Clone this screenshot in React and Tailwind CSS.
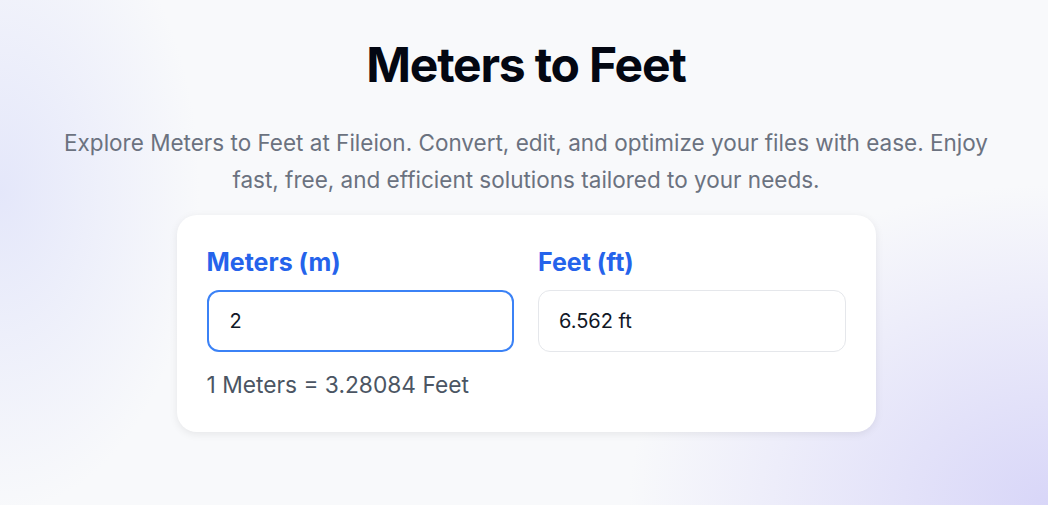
import { useState } from "react";

function App() {
  const [meters, setMeters] = useState("2");
  const feet = meters === "" ? "" : (parseFloat(meters) * 3.28084).toFixed(3) + " ft";

  return (
    <div
      className="min-h-[505px] w-full pl-[4px] bg-[#f8f9fb] bg-[radial-gradient(ellipse_200px_320px_at_0%_38%,rgba(226,229,250,0.9),rgba(248,249,251,0)),radial-gradient(ellipse_420px_320px_at_100%_100%,rgba(216,214,248,1),rgba(248,249,251,0))] flex flex-col items-center font-['Inter',sans-serif]"
    >
      <h1 className="mt-[36px] text-[48px] leading-[58px] font-bold text-[#030712] tracking-tight">
        Meters to Feet
      </h1>
      <p className="mt-[30px] max-w-[950px] text-center text-[22.5px] leading-[37px] text-[#6b7280]">
        Explore Meters to Feet at Fileion. Convert, edit, and optimize your files with ease. Enjoy
        fast, free, and efficient solutions tailored to your needs.
      </p>
      <div className="mt-[17px] w-[699px] rounded-[20px] bg-white shadow-[0_2px_8px_rgba(0,0,0,0.08)] px-[30px] pt-[32px] pb-[32px]">
        <div className="grid grid-cols-2 gap-6">
          <div className="flex flex-col">
            <label className="text-[25px] leading-[30px] font-bold text-[#2563eb]">Meters (m)</label>
            <input
              value={meters}
              onChange={(e) => setMeters(e.target.value)}
              className="mt-[13px] h-[62px] rounded-xl border-2 border-[#3b82f6] px-[21px] text-[20px] text-[#111827] outline-none"
            />
          </div>
          <div className="flex flex-col">
            <label className="text-[25px] leading-[30px] font-bold text-[#2563eb]">Feet (ft)</label>
            <input
              value={feet}
              readOnly
              className="mt-[13px] h-[62px] rounded-xl border border-[#e5e7eb] px-[20px] text-[20px] text-[#111827] outline-none"
            />
          </div>
        </div>
        <div className="mt-[18px] text-[22.75px] leading-[30px] text-[#4b5563]">1 Meters = 3.28084 Feet</div>
      </div>
    </div>
  );
}

export default App;
